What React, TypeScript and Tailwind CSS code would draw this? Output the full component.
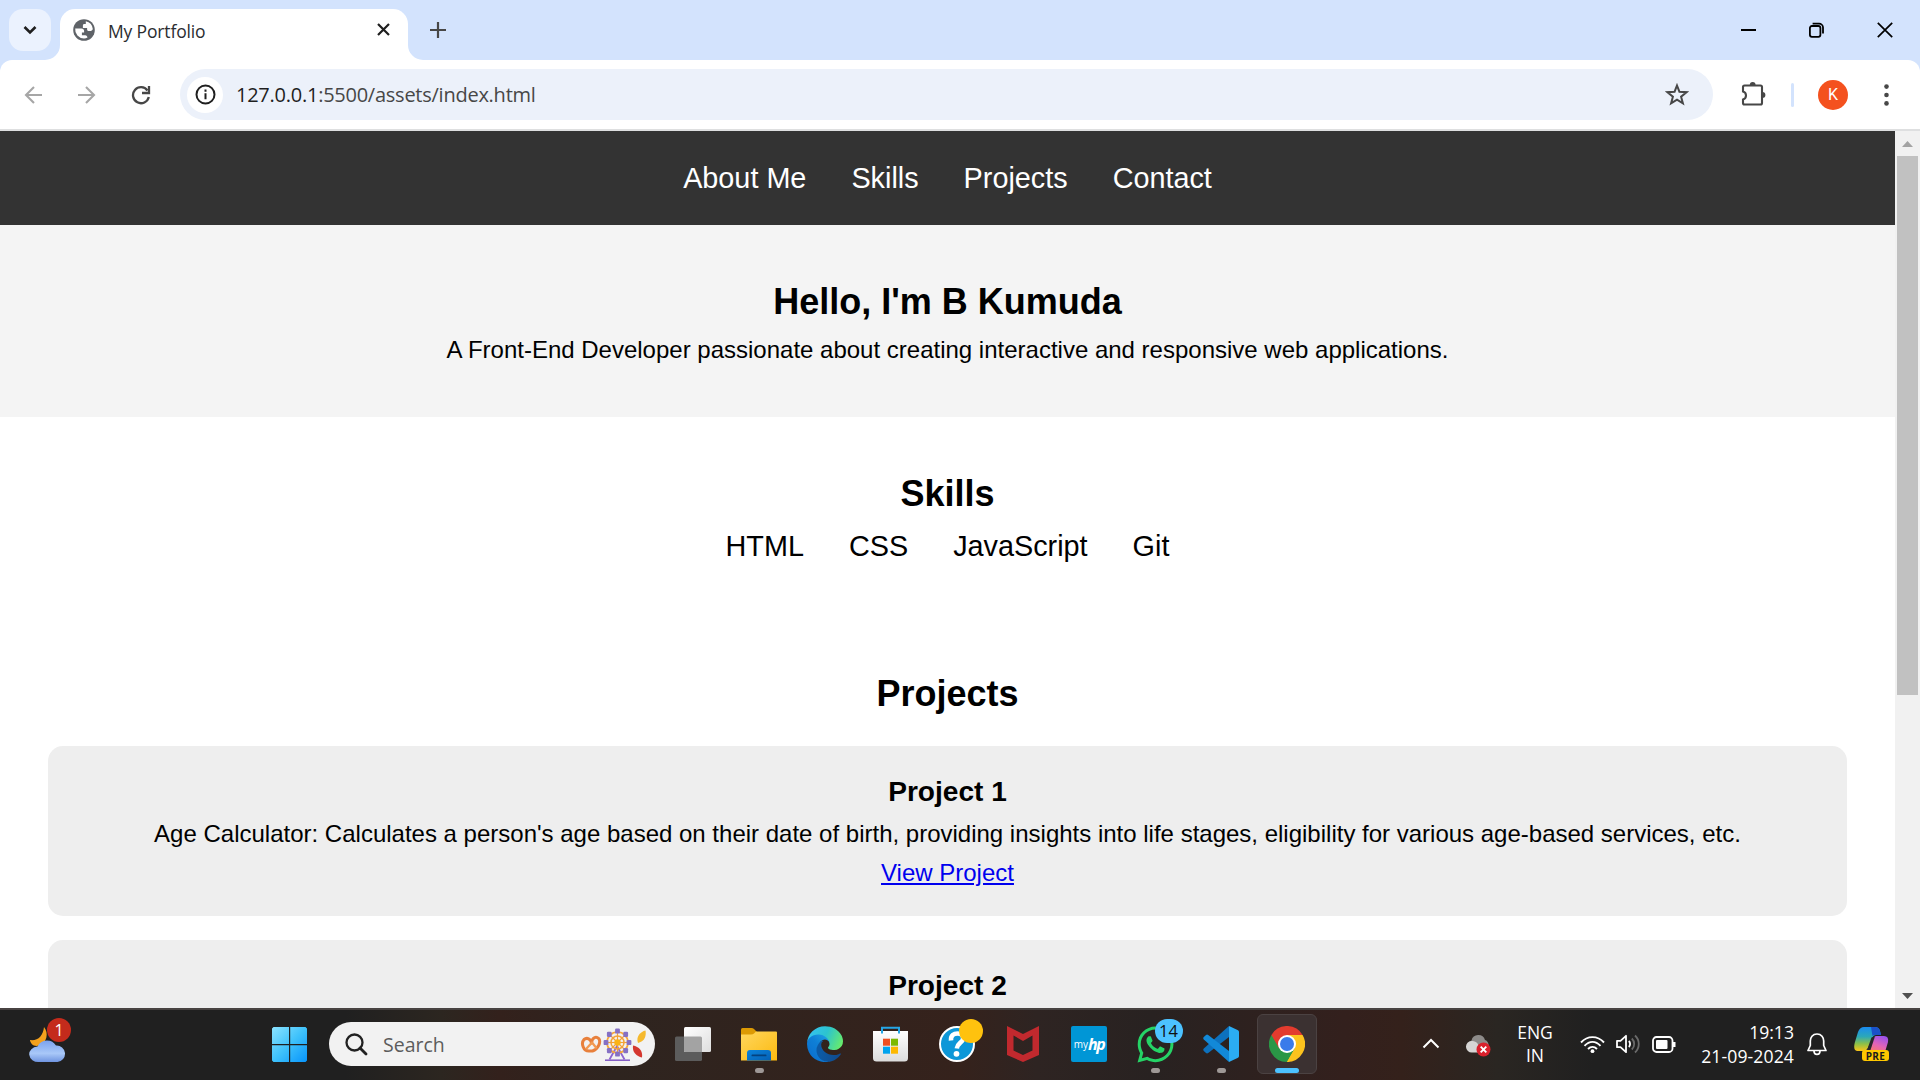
import type { ReactNode } from 'react';
import { FaWhatsapp } from 'react-icons/fa';

const UI = "font-['Open_Sans',sans-serif]";

function TabStrip() {
  return (
    <div className="flex h-[60px] items-start bg-[#d3e3fd]">
      <div className="ml-[9px] mt-[9px] flex h-[42px] w-[42px] items-center justify-center rounded-[14px] bg-[#ebf2fe]">
        <svg width="14" height="10" viewBox="0 0 14 10" fill="none" stroke="#1f1f1f" strokeWidth="2.6">
          <path d="M1.5 2 7 7.5 12.500 2" />
        </svg>
      </div>
      <div className="mt-[9px] flex h-[51px] items-end">
        <svg className="ml-[-6px]" width="15" height="15" viewBox="0 0 15 15">
          <path d="M15 0V15H0A15 15 0 0 0 15 0Z" fill="#fff" />
        </svg>
        <div className="flex h-[51px] w-[348px] items-center rounded-t-[15px] bg-white pl-[13px] pr-[18px]">
          <svg className="mt-[-9px]" width="22" height="22" viewBox="0 0 22 22">
            <circle cx="11" cy="11" r="10.8" fill="#5f6368" />
            <path
              d="M2.200 9.500h6.300c1.600 0 2.600 1.100 2.600 2.400v1.500H8.900v2.800h3.200c.8 0 1.500.4 1.900 1.100l.5 1.100c-1 .6-2.300 1-3.500 1a9 9 0 0 1-8.800-9.900ZM12.800 2.300a9 9 0 0 1 7 7.600c-.4 1.400-1.500 2-2.800 2h-1.400c-.9 0-1.500-.7-1.500-1.500V9H9.900V6.500c0-.8.600-1.400 1.500-1.400h1.400Z"
              fill="#fff"
            />
          </svg>
          <span className={`${UI} mt-[-8px] ml-[13px] flex-1 text-[17.5px] leading-6 tracking-[-0.15px] text-[#2b2d30]`}>My Portfolio</span>
          <svg className="mt-[-10px]" width="13" height="13" viewBox="0 0 13 13" stroke="#1f1f1f" strokeWidth="2.200">
            <path d="M1 1 12 12M12 1 1 12" />
          </svg>
        </div>
        <svg width="15" height="15" viewBox="0 0 15 15">
          <path d="M0 0V15H15A15 15 0 0 1 0 0Z" fill="#fff" />
        </svg>
      </div>
      <svg className="ml-[7px] mt-[22px]" width="16" height="16" viewBox="0 0 16 16" stroke="#474747" strokeWidth="2.200">
        <path d="M8 0V16M0 8H16" />
      </svg>
      <div className="flex-1" />
      <div className="mt-[21px] mr-[27px] flex items-center gap-[53px]">
        <svg width="15" height="16" viewBox="0 0 15 16">
          <rect y="7" width="15" height="2" fill="#000" />
        </svg>
        <svg className="mt-[1px]" width="15" height="16" viewBox="0 0 15 16" fill="none" stroke="#000" strokeWidth="1.800">
          <rect x=".9" y="4" width="10.500" height="10.800" rx="2" />
          <path d="M3.600 1.600H10a4 4 0 0 1 4 4V11.500" />
        </svg>
        <svg className="mt-[1px]" width="16" height="16" viewBox="0 0 16 16" stroke="#000" strokeWidth="1.700">
          <path d="M.8.8 15.200 15.200M15.200.8.8 15.200" />
        </svg>
      </div>
    </div>
  );
}

function Toolbar() {
  return (
    <div className="bg-[#d3e3fd]">
      <div className="flex h-[71px] items-center rounded-t-[12px] border-b-2 border-[#dedfe0] bg-white">
        <svg className="ml-[24px]" width="19" height="18" viewBox="0 0 19 18" fill="none" stroke="#a6a6a6" strokeWidth="2.100">
          <path d="M18 9H2M10 1 2 9 10 17" />
        </svg>
        <svg className="ml-[34px]" width="19" height="18" viewBox="0 0 19 18" fill="none" stroke="#a6a6a6" strokeWidth="2.100">
          <path d="M1 9H17M9 1 17 9 9 17" />
        </svg>
        <svg className="ml-[35px]" width="20" height="20" viewBox="0 0 20 20" fill="none" stroke="#474747" strokeWidth="2.300">
          <path d="M16.500 5.500A8 8 0 1 0 17.800 12" />
          <path d="M18 1V8H11" />
        </svg>
        <div className="ml-[29px] flex h-[51px] w-[1533px] items-center rounded-full bg-[#ecf1fa] pl-[7px] pr-[24px]">
          <div className="flex h-[36px] w-[36px] items-center justify-center rounded-full bg-white">
            <svg width="21" height="21" viewBox="0 0 21 21" fill="none" stroke="#1f1f1f" strokeWidth="2">
              <circle cx="10.500" cy="10.500" r="9" />
              <path d="M10.500 9.200V15.200M10.500 5.500V7.700" />
            </svg>
          </div>
          <span className={`${UI} ml-[13px] flex-1 text-[20px] leading-7 tracking-[-0.25px] text-[#474747]`}>
            <span className="text-[#1f1f1f]">127.0.0.1</span>:5500/assets/index.html
          </span>
          <svg width="24" height="23" viewBox="0 0 24 23" fill="none" stroke="#474747" strokeWidth="2">
            <path d="M12 2.500 14.400 8.700 21.600 9.200 16.100 13.700 17.900 20.400 12 16.700 6.100 20.400 7.900 13.700 2.400 9.200 9.600 8.700Z" />
          </svg>
        </div>
        <svg className="ml-[28px] mt-[-3px]" width="26" height="25" viewBox="0 0 26 25">
          <path
            d="M3.500 4.500H19.500Q21 4.500 21 6V22Q21 23.500 19.500 23.500H3.500Q2 23.500 2 22V18.500C6 17.500 6 11.500 2 10.500V6Q2 4.500 3.500 4.500Z"
            fill="none"
            stroke="#474747"
            strokeWidth="2.100"
          />
          <path d="M8.800 4a2.900 2.900 0 0 1 5.800 0ZM21.500 11a2.900 2.900 0 0 1 0 5.800Z" fill="#474747" />
        </svg>
        <div className="ml-[24px] h-[24px] w-[3px] rounded-full bg-[#d3e3fd]" />
        <div className="ml-[24px] flex h-[30px] w-[30px] items-center justify-center rounded-full bg-[#f4511e] font-[Roboto,sans-serif] text-[16px] leading-none text-white">
          K
        </div>
        <svg className="ml-[36px]" width="5" height="22" viewBox="0 0 5 22" fill="#474747">
          <circle cx="2.500" cy="2.600" r="2.300" />
          <circle cx="2.500" cy="11" r="2.300" />
          <circle cx="2.500" cy="19.400" r="2.300" />
        </svg>
      </div>
    </div>
  );
}

function ProjectCard({ title, text }: { title: string; text: string }) {
  return (
    <article className="mb-6 rounded-[15px] bg-[#eeeeee] p-6">
      <h3 className="text-[28.08px] leading-[1.6] font-bold">{title}</h3>
      <p>{text}</p>
      <p>
        <a className="text-[#0000ee] underline" href="#">
          View Project
        </a>
      </p>
    </article>
  );
}

function Portfolio() {
  return (
    <main className="h-full w-[1895px] overflow-hidden bg-white text-center font-['Liberation_Sans',Arial,sans-serif] text-[24px] leading-[1.6] text-black">
      <nav className="flex justify-center gap-[45px] bg-[#333333] p-6 text-[28.8px] leading-[1.6] text-white">
        <a>About Me</a>
        <a>Skills</a>
        <a>Projects</a>
        <a>Contact</a>
      </nav>
      <section className="bg-[#f4f4f4] p-12">
        <h1 className="text-[36px] leading-[1.6] font-bold">Hello, I'm B Kumuda</h1>
        <p>A Front-End Developer passionate about creating interactive and responsive web applications.</p>
      </section>
      <section className="p-12">
        <h2 className="text-[36px] leading-[1.6] font-bold">Skills</h2>
        <ul className="flex justify-center gap-[45px] text-[28.8px] leading-[1.6]">
          <li>HTML</li>
          <li>CSS</li>
          <li>JavaScript</li>
          <li>Git</li>
        </ul>
      </section>
      <section className="p-12">
        <h2 className="mb-6 text-[36px] leading-[1.6] font-bold">Projects</h2>
        <ProjectCard
          title="Project 1"
          text="Age Calculator: Calculates a person's age based on their date of birth, providing insights into life stages, eligibility for various age-based services, etc."
        />
        <article className="rounded-[15px] bg-[#eeeeee] p-6 pb-24">
          <h3 className="text-[28.08px] leading-[1.6] font-bold">Project 2</h3>
        </article>
      </section>
    </main>
  );
}

function Scrollbar() {
  return (
    <div className="flex h-full w-[25px] flex-col items-center bg-[#f1f1f1]">
      <div className="flex h-[25px] items-center">
        <svg width="11" height="6" viewBox="0 0 11 6">
          <path d="M5.500 0 11 6H0Z" fill="#a3a3a3" />
        </svg>
      </div>
      <div className="h-[539px] w-[21px] bg-[#c1c1c1]" />
      <div className="flex-1" />
      <div className="flex h-[25px] items-center">
        <svg width="11" height="6" viewBox="0 0 11 6">
          <path d="M5.500 6 11 0H0Z" fill="#505050" />
        </svg>
      </div>
    </div>
  );
}

function WeatherIcon() {
  return (
    <svg width="38" height="38" viewBox="0 0 38 38">
      <defs>
        <linearGradient id="cloud" x1="0" y1="0" x2="0" y2="1">
          <stop offset="0" stopColor="#7ba2ee" />
          <stop offset=".6" stopColor="#a9c8f8" />
          <stop offset="1" stopColor="#6f94e0" />
        </linearGradient>
      </defs>
      <path d="M15 2c5 6 3 16-5 18.500C5 22 1.500 19 1 15c8 1 13-4 14-13Z" fill="#f4a11d" />
      <path d="M10 37a9 7.800 0 0 1-1.500-15.600A10.500 10.500 0 0 1 27 20.500a8 8 0 0 1 1.500 16.500Z" fill="url(#cloud)" />
    </svg>
  );
}

function StartIcon() {
  return (
    <svg width="35" height="35" viewBox="0 0 35 35">
      <defs>
        <linearGradient id="win" gradientUnits="userSpaceOnUse" x1="0" y1="0" x2="35" y2="35">
          <stop offset="0" stopColor="#8be3ff" />
          <stop offset=".5" stopColor="#3fc2fb" />
          <stop offset="1" stopColor="#0794fb" />
        </linearGradient>
      </defs>
      <path d="M1.500 0H17V17H0V1.500ZM18.200 0H33.500L35 1.500V17H18.200ZM0 18.200H17V35H1.500L0 33.500ZM18.200 18.200H35V33.500L33.500 35H18.200Z" fill="url(#win)" />
    </svg>
  );
}

function FestiveArt() {
  const spokes = [0, 45, 90, 135, 180, 225, 270, 315];
  return (
    <svg width="66" height="34" viewBox="0 0 66 34" fill="none">
      <g stroke="#e8803c" strokeWidth="3" strokeLinejoin="round" strokeLinecap="round">
        <path d="M9.500 24C3 24.500.8 16 4 12.500 7 10 11 12 11.500 16c.5-5.500 4.500-7 7.200-4.500 2.600 3.500-.5 10.500-6.200 12.500H8" />
        <path d="M6.500 21.500 12 15.500 16 20.500" strokeWidth="2.300" stroke="#f29a52" />
      </g>
      <path d="M25 33.200H50" stroke="#7e57c2" strokeWidth="1.500" />
      <path d="M29.500 32.500 37 19 44.500 32.500" stroke="#8e63d0" strokeWidth="1.800" />
      <circle cx="37.500" cy="15.500" r="10.500" stroke="#f5a63a" strokeWidth="1.700" />
      <circle cx="37.500" cy="15.500" r="6.500" stroke="#f5a63a" strokeWidth="1.500" />
      {spokes.map((a) => (
        <g key={a} transform={`rotate(${a} 37.5 15.5)`}>
          <path d="M37.500 15.500V5" stroke="#f2a03a" strokeWidth="1.200" />
        </g>
      ))}
      {[
        [37.5, 4],
        [45.7, 7.3],
        [49, 15.5],
        [45.7, 23.7],
        [37.5, 27],
        [29.3, 23.7],
        [26, 15.5],
        [29.3, 7.3],
      ].map(([x, y]) => (
        <rect key={`${x}-${y}`} x={x - 2.4} y={y - 2.6} width="4.800" height="5.200" rx="1.200" fill="#8570c4" />
      ))}
      <circle cx="37.500" cy="15.500" r="3.200" fill="#fbb316" />
      <path d="M65.500 3.500c1 6-1 11-7.500 12.500-2-5 1-11 7.500-12.500Z" fill="#f5b92e" />
      <path d="M53 18.500c6 1 10 5.500 9 12-5.500-1-10-5.500-9-12Z" fill="#d5372f" />
    </svg>
  );
}

function TaskViewIcon() {
  return (
    <svg width="36" height="35" viewBox="0 0 36 35">
      <defs>
        <linearGradient id="tvw" x1="0" y1="0" x2="1" y2="1">
          <stop offset="0" stopColor="#fff" />
          <stop offset="1" stopColor="#dedede" />
        </linearGradient>
      </defs>
      <rect x="0" y="9.500" width="27" height="24.500" rx="1.500" fill="#5c5c5c" />
      <rect x="9" y="0" width="27" height="25" rx="1.500" fill="url(#tvw)" />
      <path d="M9 9.500H25.500Q27 9.500 27 11V25H10.500Q9 25 9 23.500Z" fill="#a3a3a3" />
    </svg>
  );
}

function ExplorerIcon() {
  return (
    <svg width="36" height="33" viewBox="0 0 36 33">
      <defs>
        <linearGradient id="fold" x1="0" y1="0" x2="1" y2="1">
          <stop offset="0" stopColor="#ffd75e" />
          <stop offset="1" stopColor="#fbb90f" />
        </linearGradient>
        <linearGradient id="foldb" x1="0" y1="0" x2="1" y2="1">
          <stop offset="0" stopColor="#0b84dc" />
          <stop offset="1" stopColor="#0560b4" />
        </linearGradient>
      </defs>
      <path d="M0 1.500Q0 0 1.500 0H10.500Q12 0 13 1L15.500 3.500V9H0Z" fill="#dc9a04" />
      <path d="M0 6.500H10Q12 6.500 13 5.500L15 3.500H35Q36 3.500 36 4.500V32.500H0Z" fill="url(#fold)" />
      <path d="M6 32.500V25Q6 22 9 22H27Q30 22 30 25V32.500Z" fill="url(#foldb)" />
      <rect x="10.500" y="26.500" width="15" height="1.800" rx=".9" fill="#04427f" />
    </svg>
  );
}

function EdgeIcon() {
  return (
    <svg width="36" height="36" viewBox="0 0 256 256">
      <defs>
        <linearGradient id="e1" x1=".2" y1=".6" x2="1" y2=".7">
          <stop offset="0" stopColor="#0c59a4" />
          <stop offset="1" stopColor="#114a8b" />
        </linearGradient>
        <linearGradient id="e2" x1=".9" y1=".2" x2=".2" y2="1">
          <stop offset="0" stopColor="#1b9de2" />
          <stop offset=".4" stopColor="#0f7fd6" />
          <stop offset="1" stopColor="#0a6fce" />
        </linearGradient>
        <linearGradient id="e3" x1="0" y1=".3" x2="1" y2=".6">
          <stop offset="0" stopColor="#35c1f1" />
          <stop offset=".5" stopColor="#2cc3cf" />
          <stop offset="1" stopColor="#66eb6e" />
        </linearGradient>
      </defs>
      <path d="M235.700 195.500a94 94 0 0 1-10.600 4.700 102 102 0 0 1-35.900 6.400c-47.300 0-88.500-32.500-88.500-74.300A31.500 31.500 0 0 1 117.100 105C74.300 106.800 63.300 151.400 63.300 177.500c0 73.900 68.100 78.500 82.800 78.500 7.900 0 19.800-2.300 27-4.600l1.300-.4a128.300 128.300 0 0 0 66.600-50 4 4 0 0 0-5.300-5.500Z" fill="url(#e1)" />
      <path d="M105.700 241.400a79.200 79.200 0 0 1-22.700-21.300 80.700 80.700 0 0 1 29.500-120c3.100-1.500 8.500-4.100 15.500-4a32.400 32.400 0 0 1 25.700 13 31.900 31.900 0 0 1 6.400 18.700c0-.2 24.400-79.600-80-79.600-43.900 0-80 41.600-80 78.200a130 130 0 0 0 12.100 56 128 128 0 0 0 156.400 67.100 75.600 75.600 0 0 1-62.900-8Z" fill="url(#e2)" />
      <path d="M152.300 148.900c-.8 1-3.300 2.500-3.300 5.600 0 2.600 1.700 5.100 4.700 7.200 14.400 10 41.500 8.700 41.600 8.700a59.600 59.600 0 0 0 30.300-8.300 61.400 61.400 0 0 0 30.400-52.900c.3-22.400-8-37.300-11.300-43.900C223.500 23.900 177.700.9 128 .9A128 128 0 0 0 0 127c.5-36.500 36.800-66 80-66 3.500 0 23.500.3 42 10 16.300 8.600 24.900 19 30.900 29.300 6.100 10.700 7.200 24.100 7.200 29.500 0 5.400-2.700 13.300-7.800 19.100Z" fill="url(#e3)" />
    </svg>
  );
}

function StoreIcon() {
  return (
    <svg className="mr-px" width="35" height="36" viewBox="0 0 35 36">
      <defs>
        <linearGradient id="bag" x1="0" y1="0" x2="0" y2="1">
          <stop offset="0" stopColor="#fff" />
          <stop offset="1" stopColor="#dcdcdc" />
        </linearGradient>
      </defs>
      <path d="M0 5H35V32Q35 35.500 31.500 35.500H3.500Q0 35.500 0 32Z" fill="url(#bag)" />
      <path d="M9 7.500V1.800H26V7.500" fill="none" stroke="#25a6e6" strokeWidth="2" />
      <rect x="10" y="12.700" width="7" height="7" fill="#f04e1f" />
      <rect x="18" y="12.700" width="7" height="7" fill="#7db900" />
      <rect x="10" y="20.700" width="7" height="7" fill="#00a3ee" />
      <rect x="18" y="20.700" width="7" height="7" fill="#fdb800" />
    </svg>
  );
}

function HelpIcon() {
  return (
    <svg width="36" height="36" viewBox="0 0 36 36">
      <circle cx="18" cy="18" r="17" fill="#0d97d8" stroke="#fff" strokeWidth="2" />
      <path d="M12 14.500C11.500 9 15 7.500 18.500 7.500 23 7.500 24.500 10 24 13 23.500 16.500 18.500 17 17.800 22.500" fill="none" stroke="#fff" strokeWidth="4.600" />
      <circle cx="17.500" cy="27.800" r="2.900" fill="#fff" />
    </svg>
  );
}

function McAfeeIcon() {
  return (
    <svg width="32" height="36" viewBox="0 0 32 36">
      <path d="M0 0 16 8 32 0V29L16 36 0 29ZM6.500 9.500V24.500L16 29 25.500 24.500V9.500L16 15Z" fill="#c1292e" fillRule="evenodd" />
    </svg>
  );
}

function VsCodeIcon() {
  return (
    <svg width="36" height="36" viewBox="0 0 36 36">
      <path d="M26 0 .8 22.500Q-.3 23.800.8 25L3 27Q4 27.800 5.200 27L26 11Z" fill="#0d71bd" />
      <path d="M26 36 .8 13.500Q-.3 12.200.8 11L3 9Q4 8.200 5.200 9L26 25Z" fill="#1289d8" />
      <path d="M26 0 35 4.200Q36 4.800 36 6V30Q36 31.200 35 31.800L26 36Z" fill="#2bacf2" />
    </svg>
  );
}

function ChromeIcon() {
  return (
    <svg width="36" height="36" viewBox="0 0 36 36">
      <path d="M18 18 2.400 9A18 18 0 0 1 33.600 9Z" fill="#e33b2e" />
      <path d="M18 18 33.600 9A18 18 0 0 1 18 36Z" fill="#fcc31e" />
      <path d="M18 18V36A18 18 0 0 1 2.400 9Z" fill="#2a9746" />
      <path d="M18 9H33.600L25.800 22.500Z" fill="#fcc31e" />
      <path d="M2.400 9 10.200 22.500 18 9Z" fill="#e33b2e" />
      <path d="M10.200 22.500 18 36 25.800 22.500Z" fill="#2a9746" />
      <path d="M25.800 22.500 18 36H20L28 24V18Z" fill="#fcc31e" />
      <circle cx="18" cy="18" r="9" fill="#fff" />
      <circle cx="18" cy="18" r="7" fill="#3a7bea" />
    </svg>
  );
}

function AppCell({ children, running, active }: { children: ReactNode; running?: boolean; active?: boolean }) {
  return (
    <div
      className={
        active
          ? 'mx-[3px] mt-[4px] flex h-[60px] w-[60px] flex-col items-center rounded-[6px] border border-[#4b4242] bg-[#3b3131] pt-[11px]'
          : 'mt-[4px] flex h-[60px] w-[66px] flex-col items-center pt-[12px]'
      }
    >
      <div className="relative flex h-[36px] items-center justify-center">{children}</div>
      {running && <div className="mt-[6px] h-[5px] w-[9px] rounded-full bg-[#9e9896]" />}
      {active && <div className="mt-[6px] h-[5px] w-[24px] rounded-full bg-[#4cc2ff]" />}
    </div>
  );
}

function SystemTray() {
  return (
    <div className="flex h-full items-center text-white">
      <svg className="mt-[-1px]" width="18" height="11" viewBox="0 0 18 11" fill="none" stroke="#fff" strokeWidth="2">
        <path d="M1.500 9.500 9 2 16.500 9.500" />
      </svg>
      <svg className="ml-[26px] mt-[3px]" width="26" height="22" viewBox="0 0 26 22">
        <path d="M6 16a5.500 5.500 0 0 1-.5-10.500A7 7 0 0 1 19 5c3 1 4 4 3.500 7L10 17Z" fill="#8d8b89" />
        <path d="M6 17.500A5.700 5.700 0 0 1 5.500 6C10 5.500 14 9 14 17.500Z" fill="#d6d5d4" />
        <circle cx="17.500" cy="14.500" r="7" fill="#d9202c" />
        <path d="M14.700 11.700 20.300 17.300M20.300 11.700 14.700 17.300" stroke="#fff" strokeWidth="1.900" />
      </svg>
      <div className={`${UI} ml-[24px] w-[38px] text-center text-[17.5px] leading-[23px]`}>
        <div>ENG</div>
        <div>IN</div>
      </div>
      <svg className="ml-[26px]" width="25" height="19" viewBox="0 0 25 19" fill="none" stroke="#fff" strokeWidth="1.900">
        <path d="M1 7.500C7.500.3 17.500.3 24 7.500M4.500 10.800C9.500 5.500 15.500 5.500 20.500 10.800M8 14C10.700 11.300 14.300 11.300 17 14" />
        <circle cx="12.500" cy="16.200" r="1.900" fill="#fff" stroke="none" />
      </svg>
      <svg className="ml-[11px]" width="25" height="20" viewBox="0 0 25 20" fill="none" stroke="#fff" strokeWidth="1.800">
        <path d="M1 6.800H4.500L10 1.800V18.200L4.500 13.200H1Z" strokeLinejoin="round" />
        <path d="M12.800 7C14.500 8.500 14.500 11.500 12.800 13" />
        <path d="M15.800 4.500C19 7.500 19 12.500 15.800 15.500M19 1.500C24 6 24 14 19 18.500" stroke="#6a6a6a" />
      </svg>
      <svg className="ml-[11px]" width="25" height="17" viewBox="0 0 25 17" fill="none" stroke="#fff" strokeWidth="1.800">
        <rect x="1" y="1" width="19.500" height="15" rx="3.500" />
        <rect x="4" y="4" width="11.500" height="9" rx="1" fill="#fff" stroke="none" />
        <path d="M22 6v5" strokeWidth="3" />
      </svg>
      <div className={`${UI} ml-[19px] mt-[-1px] w-[98px] text-right text-[17.6px] leading-[24px] whitespace-nowrap`}>
        <div>19:13</div>
        <div className="tracking-[0.1px]">21-09-2024</div>
      </div>
      <svg className="ml-[13px]" width="20" height="23" viewBox="0 0 20 23" fill="none" stroke="#fff" strokeWidth="1.700">
        <path d="M10 1C5.500 1 3.300 4.500 3.300 8V12.500L1 17.500H19L16.700 12.500V8C16.700 4.500 14.500 1 10 1Z" strokeLinejoin="round" />
        <path d="M7 18C7 22.500 13 22.500 13 18" />
      </svg>
      <div className="relative ml-[27px] h-[36px] w-[36px]">
        <svg width="36" height="36" viewBox="0 0 36 36">
          <defs>
            <linearGradient id="cp1" x1="0" y1="0" x2="0" y2="1">
              <stop offset="0" stopColor="#1a8bf0" />
              <stop offset=".4" stopColor="#2ba8b8" />
              <stop offset=".7" stopColor="#8cc048" />
              <stop offset="1" stopColor="#fbc417" />
            </linearGradient>
            <linearGradient id="cp2" x1=".8" y1="0" x2=".2" y2="1">
              <stop offset="0" stopColor="#9a52ee" />
              <stop offset=".5" stopColor="#e364b6" />
              <stop offset="1" stopColor="#ff7d55" />
            </linearGradient>
          </defs>
          <path d="M10 1H21Q25 1 26 5L27 9H22Q19 9 18 13L15 20Q13 25 9 25H3Q-1 24 .7 17L4 6Q6 1 10 1Z" fill="url(#cp1)" />
          <path d="M17 1H21Q25 1 26 5L27 9H22Q19 9 18.500 10Z" fill="#1b51c9" />
          <path d="M22 10H30Q35 10 34 16L31 26H8Q14 25 16.500 20L19 13Q20 10 22 10Z" fill="url(#cp2)" />
          <path d="M17.500 11.500 21 10.200 16.500 24 13 24Z" fill="#26262a" />
        </svg>
        <div className={`${UI} absolute left-[8px] top-[24px] flex h-[11px] w-[27px] items-center justify-center rounded-[3px] bg-[#ffc800] text-[10px] leading-none font-bold tracking-[0.4px] text-[#1b1b1b]`}>
          PRE
        </div>
      </div>
    </div>
  );
}

function Taskbar() {
  return (
    <div className="flex h-[72px] items-start border-t-2 border-[#484342] bg-[linear-gradient(90deg,#202020_0%,#202020_18%,#2c2620_23%,#33211c_26%,#2e241f_32%,#35221c_50%,#2e2422_54%,#282221_60%,#33201d_70%,#34211b_73%,#2a2622_78%,#202020_83%,#202020_100%)]">
      <div className="relative ml-[29px] mt-[15px]">
        <WeatherIcon />
        <div className={`${UI} absolute left-[18px] top-[-7px] flex h-[24px] w-[24px] items-center justify-center rounded-full bg-[#c42b1c] text-[16px] leading-none text-white`}>
          1
        </div>
      </div>
      <div className="ml-[205px] mt-[17px]">
        <StartIcon />
      </div>
      <div className="ml-[22px] mt-[12px] flex h-[44px] w-[326px] items-center rounded-full bg-[#f2f2f2] pl-[16px]">
        <svg width="23" height="23" viewBox="0 0 23 23" fill="none" stroke="#222" strokeWidth="2.300">
          <circle cx="9.500" cy="9.500" r="8" />
          <path d="M15 15 21 21" strokeWidth="2.800" strokeLinecap="round" />
        </svg>
        <span className={`${UI} ml-[15px] w-[197px] pt-px text-[19.5px] leading-7 text-[#5c5c5c]`}>Search</span>
        <FestiveArt />
      </div>
      <div className="ml-[5px] flex">
        <AppCell>
          <TaskViewIcon />
        </AppCell>
        <AppCell running>
          <ExplorerIcon />
        </AppCell>
        <AppCell>
          <EdgeIcon />
        </AppCell>
        <AppCell>
          <StoreIcon />
        </AppCell>
        <AppCell>
          <HelpIcon />
          <div className="absolute left-[20px] top-[-7px] h-[24px] w-[24px] rounded-full bg-[#ffc20e]" />
        </AppCell>
        <AppCell>
          <McAfeeIcon />
        </AppCell>
        <AppCell>
          <div className={`${UI} flex h-[36px] w-[36px] items-center justify-center rounded-[2px] bg-[#0096d6] leading-none text-white`}>
            <span className="text-[10px]">my</span>
            <span className="text-[16px] font-bold italic tracking-[-1.500px]">hp</span>
          </div>
        </AppCell>
        <AppCell running>
          <FaWhatsapp size={41} color="#25d366" />
          <div className={`${UI} absolute left-[20px] top-[-7px] flex h-[24px] w-[28px] items-center justify-center rounded-full bg-[#4cc2ff] text-[16.5px] leading-none text-[#101010]`}>
            14
          </div>
        </AppCell>
        <AppCell running>
          <VsCodeIcon />
        </AppCell>
        <AppCell active>
          <ChromeIcon />
        </AppCell>
      </div>
      <div className="flex-1" />
      <div className="mr-[30px] h-[68px]">
        <SystemTray />
      </div>
    </div>
  );
}

export default function App() {
  return (
    <div className="flex h-[1080px] w-[1920px] flex-col overflow-hidden bg-white">
      <TabStrip />
      <Toolbar />
      <div className="flex h-[877px] overflow-hidden">
        <Portfolio />
        <Scrollbar />
      </div>
      <Taskbar />
    </div>
  );
}
